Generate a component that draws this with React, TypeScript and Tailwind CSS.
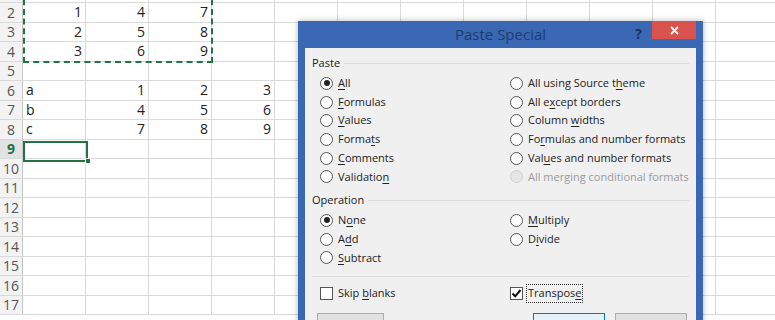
import React from "react";

const ROWS = Array.from({ length: 17 }, (_, i) => i + 1);
const COLS = 12;

const cellData: Record<number, (string | null)[]> = {
  2: ["1", "4", "7"],
  3: ["2", "5", "8"],
  4: ["3", "6", "9"],
  6: ["a", "1", "2", "3"],
  7: ["b", "4", "5", "6"],
  8: ["c", "7", "8", "9"],
};

function U({ children }: { children: React.ReactNode }) {
  return <span className="underline underline-offset-2">{children}</span>;
}

function Radio({ checked, disabled, label }: { checked?: boolean; disabled?: boolean; label: React.ReactNode }) {
  return (
    <div className="flex items-center h-[18.7px] gap-[5px] whitespace-nowrap">
      <span
        className={
          "w-[13px] h-[13px] shrink-0 rounded-full border flex items-center justify-center " +
          (disabled ? "border-[#d0d0d0] bg-[#e6e6e6]" : "border-[#555] bg-white")
        }
      >
        {checked && <span className="w-[6px] h-[6px] rounded-full bg-[#222]" />}
      </span>
      <span className={disabled ? "text-[#9a9a9a]" : "text-[#222]"}>{label}</span>
    </div>
  );
}

function Check({ checked, label, focus }: { checked?: boolean; label: React.ReactNode; focus?: boolean }) {
  return (
    <div className="flex items-center gap-[4px] whitespace-nowrap">
      <span className="w-[13px] h-[13px] shrink-0 border border-[#555] bg-white flex items-center justify-center">
        {checked && (
          <svg width="11" height="11" viewBox="0 0 11 11">
            <path d="M1.5 5.5 L4.2 8.3 L9.5 2" fill="none" stroke="#111" strokeWidth="2" />
          </svg>
        )}
      </span>
      <span className={"text-[#222] px-[1px] " + (focus ? "outline outline-1 outline-dotted outline-[#333]" : "")}>{label}</span>
    </div>
  );
}

export default function App() {
  return (
    <div className="relative w-[775px] h-[320px] overflow-hidden bg-white" style={{ fontFamily: "'Open Sans', 'Noto Sans', sans-serif" }}>
      {/* Spreadsheet */}
      <div className="-mt-[16.5px] flex flex-col text-[13px] text-[#222]" style={{ fontFamily: "'Open Sans', 'Liberation Sans', sans-serif" }}>
        {ROWS.map((r) => (
          <div key={r} className="flex h-[19.5px] border-b border-[#dadada] shrink-0">
            <div
              className={
                "w-[23px] shrink-0 flex items-center justify-center border-r border-[#c6c6c6] text-[14px] " +
                (r === 9 ? "bg-[#e2e2e2] text-[#217346] font-bold" : "bg-[#f3f3f3] text-[#555]")
              }
            >
              {r}
            </div>
            {Array.from({ length: COLS }, (_, c) => {
              const v = cellData[r]?.[c] ?? null;
              const left = v !== null && /[a-z]/.test(v);
              return (
                <div
                  key={c}
                  className={
                    "w-[63px] shrink-0 border-r border-[#dadada] flex items-center px-[3px] text-[14px] leading-none " +
                    (left ? "justify-start" : "justify-end")
                  }
                >
                  {v}
                </div>
              );
            })}
          </div>
        ))}
      </div>

      {/* Copy marquee */}
      <div className="absolute left-[23px] top-[-20px] w-[190px] h-[83px] border-2 border-dashed border-[#217346]" />
      {/* Active cell */}
      <div className="absolute left-[23px] top-[141px] w-[65px] h-[21px] border-2 border-[#217346]" />
      <div className="absolute left-[85px] top-[158px] w-[6px] h-[6px] bg-[#217346] border border-white" />

      {/* Dialog */}
      <div className="absolute left-[298px] top-[21px] w-[405px] h-[320px] bg-[#3a68b4] px-[7px] pb-[7px] flex flex-col shadow-[0_0_6px_rgba(0,0,0,0.3)]">
        <div className="h-[27px] shrink-0 relative flex items-center justify-center">
          <span className="text-[15px] text-[#1f3d6e]">Paste Special</span>
          <span className="absolute right-[54px] top-[2px] text-[14px] font-bold text-[#1a2f55]">?</span>
          <div className="absolute right-0 top-0 w-[44px] h-[18px] bg-[#d9524d] flex items-center justify-center">
            <svg width="9" height="9" viewBox="0 0 9 9">
              <path d="M1 1 L8 8 M8 1 L1 8" stroke="white" strokeWidth="1.8" />
            </svg>
          </div>
        </div>
        <div className="flex-1 bg-[#f0f0f0] px-[7px] text-[11px] text-[#222]">
          <div className="flex items-center gap-[4px] h-[16px] mt-[7px]">
            <span className="text-[#222]">Paste</span>
            <div className="flex-1 h-px bg-[#dcdcdc]" />
          </div>
          <div className="grid grid-cols-[190px_1fr] pl-[8px] mt-[3px]">
            <div className="flex flex-col">
              <Radio checked label={<><U>A</U>ll</>} />
              <Radio label={<><U>F</U>ormulas</>} />
              <Radio label={<><U>V</U>alues</>} />
              <Radio label={<>Forma<U>t</U>s</>} />
              <Radio label={<><U>C</U>omments</>} />
              <Radio label={<>Validatio<U>n</U></>} />
            </div>
            <div className="flex flex-col">
              <Radio label={<>All using Source t<U>h</U>eme</>} />
              <Radio label={<>All e<U>x</U>cept borders</>} />
              <Radio label={<>Column <U>w</U>idths</>} />
              <Radio label={<>Fo<U>r</U>mulas and number formats</>} />
              <Radio label={<>Val<U>u</U>es and number formats</>} />
              <Radio disabled label={<>All merging conditional formats</>} />
            </div>
          </div>
          <div className="flex items-center gap-[4px] h-[16px] mt-[6px]">
            <span>Operation</span>
            <div className="flex-1 h-px bg-[#dcdcdc]" />
          </div>
          <div className="grid grid-cols-[190px_1fr] pl-[8px] mt-[3px]">
            <div className="flex flex-col">
              <Radio checked label={<>N<U>o</U>ne</>} />
              <Radio label={<>A<U>d</U>d</>} />
              <Radio label={<><U>S</U>ubtract</>} />
            </div>
            <div className="flex flex-col">
              <Radio label={<><U>M</U>ultiply</>} />
              <Radio label={<>D<U>i</U>vide</>} />
            </div>
          </div>
          <div className="h-px bg-[#dcdcdc] mt-[9px]" />
          <div className="grid grid-cols-[190px_1fr] pl-[8px] mt-[8px]">
            <Check label={<>Skip <U>b</U>lanks</>} />
            <Check checked focus label={<>Transpos<U>e</U></>} />
          </div>
          <div className="flex mt-[11px]">
            <div className="ml-[5px] w-[67px] h-[23px] border border-[#adadad] bg-[#e1e1e1] flex items-center justify-center whitespace-nowrap">
              Paste <U>L</U>ink
            </div>
            <div className="ml-auto w-[72px] h-[23px] border border-[#0078d7] bg-[#e5f1fb] flex items-center justify-center">OK</div>
            <div className="ml-[10px] mr-[2px] w-[72px] h-[23px] border border-[#adadad] bg-[#e1e1e1] flex items-center justify-center">Cancel</div>
          </div>
        </div>
      </div>
    </div>
  );
}
